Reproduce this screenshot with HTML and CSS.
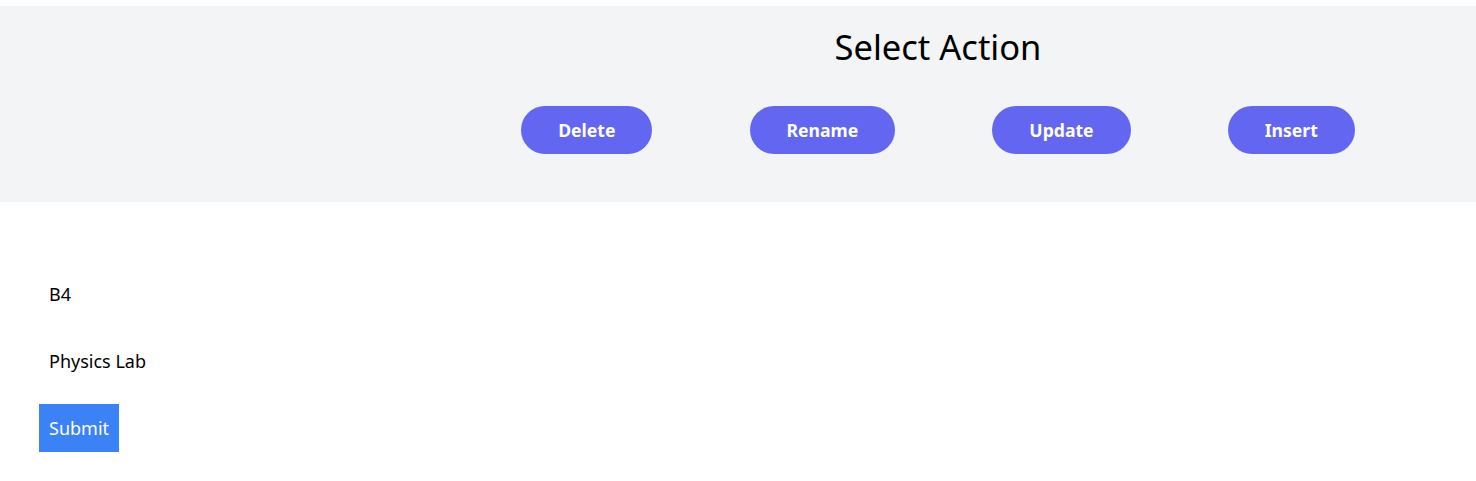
FILE: index.html
```html
<!DOCTYPE html>
<html lang="en">
<head>
<meta charset="utf-8">
<title>Select Action</title>
<link rel="stylesheet" href="styles.css">
</head>
<body>
<header class="action-bar">
  <div class="spacer"></div>
  <div class="action-main">
    <h1 class="title">Select Action</h1>
    <div class="actions">
      <button class="pill" type="button">Delete</button>
      <button class="pill" type="button">Rename</button>
      <button class="pill" type="button">Update</button>
      <button class="pill" type="button">Insert</button>
    </div>
  </div>
</header>
<form class="entry">
  <input class="field" type="text" value="B4">
  <input class="field" type="text" value="Physics Lab">
  <button class="submit" type="button">Submit</button>
</form>
</body>
</html>
```
FILE: styles.css
```css
* { box-sizing: border-box; }
html, body { margin: 0; padding: 0; background: #ffffff; }
body {
  font-family: "Noto Sans", "Open Sans", sans-serif;
  color: #000;
  font-size: 18px;
  line-height: 28px;
}
.action-bar {
  margin-top: 6px;
  height: 196px;
  background: #f3f4f6;
  display: flex;
}
.spacer { width: 400px; flex: none; }
.action-main {
  flex: 1;
  display: flex;
  flex-direction: column;
  align-items: center;
  padding-top: 21px;
}
.title {
  margin: 0;
  font-size: 34.5px;
  line-height: 40px;
  font-weight: 400;
}
.actions {
  margin-top: 39px;
  align-self: stretch;
  display: flex;
  justify-content: space-evenly;
  padding: 0 24px;
}
.pill {
  font: inherit;
  font-size: 17.6px;
  font-weight: 700;
  color: #fff;
  background: #6366f1;
  border: none;
  border-radius: 9999px;
  height: 48px;
  padding: 0 37px;
}
.entry {
  padding: 68px 0 0 39px;
  display: flex;
  flex-direction: column;
  align-items: flex-start;
  gap: 19px;
}
.field {
  font: inherit;
  color: #000;
  background: transparent;
  border: none;
  outline: none;
  padding: 10px;
  line-height: 28px;
  height: 48px;
  width: 300px;
}
.submit {
  font: inherit;
  color: #fff;
  background: #3b82f6;
  border: none;
  height: 48px;
  padding: 0 10px;
}
```
